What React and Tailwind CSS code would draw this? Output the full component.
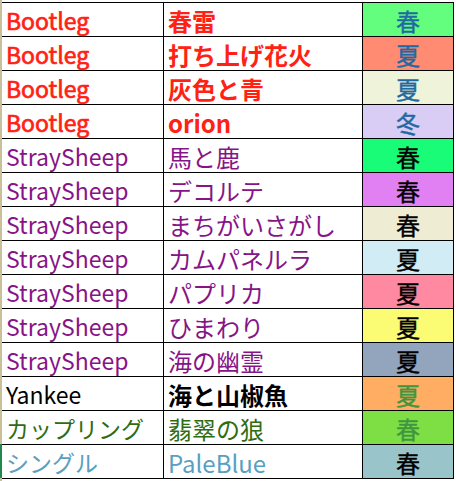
import React from 'react';

const RED = 'text-[#ff2214]';
const PURPLE = 'text-[#871487]';
const GREEN = 'text-[#2f6c12]';
const SKY = 'text-[#5a9fbf]';
const BLUE = 'text-[#2069a3]';
const LEAF = 'text-[#3e9640]';

// one row per song: artist, title, season cell
const rows = [
    { artist: 'Bootleg', title: '春雷', season: '春', a: RED, t: RED, bold: true, bg: 'bg-[#64fe7e]', s: BLUE },
    { artist: 'Bootleg', title: '打ち上げ花火', season: '夏', a: RED, t: RED, bold: true, bg: 'bg-[#ff8c72]', s: BLUE },
    { artist: 'Bootleg', title: '灰色と青', season: '夏', a: RED, t: RED, bold: true, bg: 'bg-[#eef3d9]', s: BLUE },
    { artist: 'Bootleg', title: 'orion', season: '冬', a: RED, t: RED, bold: true, bg: 'bg-[#d9ccf5]', s: BLUE },
    { artist: 'StraySheep', title: '馬と鹿', season: '春', a: PURPLE, t: PURPLE, bg: 'bg-[#19fc77]', s: 'text-black' },
    { artist: 'StraySheep', title: 'デコルテ', season: '春', a: PURPLE, t: PURPLE, bg: 'bg-[#e080f2]', s: 'text-black' },
    { artist: 'StraySheep', title: 'まちがいさがし', season: '春', a: PURPLE, t: PURPLE, bg: 'bg-[#eeedd3]', s: 'text-black' },
    { artist: 'StraySheep', title: 'カムパネルラ', season: '夏', a: PURPLE, t: PURPLE, bg: 'bg-[#d1ecf5]', s: 'text-black' },
    { artist: 'StraySheep', title: 'パプリカ', season: '夏', a: PURPLE, t: PURPLE, bg: 'bg-[#ff89a0]', s: 'text-black' },
    { artist: 'StraySheep', title: 'ひまわり', season: '夏', a: PURPLE, t: PURPLE, bg: 'bg-[#fbfb74]', s: 'text-black' },
    { artist: 'StraySheep', title: '海の幽霊', season: '夏', a: PURPLE, t: PURPLE, bg: 'bg-[#93a5bd]', s: 'text-black' },
    { artist: 'Yankee', title: '海と山椒魚', season: '夏', a: 'text-black', t: 'text-black font-bold', bg: 'bg-[#ffad62]', s: LEAF },
    { artist: 'カップリング', title: '翡翠の狼', season: '春', a: GREEN, t: GREEN, bg: 'bg-[#7ddf43]', s: LEAF },
    { artist: 'シングル', title: 'PaleBlue', season: '春', a: SKY, t: SKY, bg: 'bg-[#99c4ca]', s: 'text-black' },
];

export default function App() {
    return (
        <div className="w-[456px] h-[481px] bg-white flex font-['Noto_Sans_CJK_JP',sans-serif] leading-none">
            {/* sheet edge strip */}
            <div className="w-[2px] flex flex-col">
                <div className="h-[444px] bg-[#c9bf98]"></div>
                <div className="h-[34px] bg-[#21874a]"></div>
                <div className="flex-1 bg-[#c9bf98]"></div>
            </div>

            <div className="pt-[2px]">
                <div className="w-[452px] border-t border-black">
                    {rows.map((r, i) => (
                        <div key={i} className="h-[34px] grid grid-cols-[162px_199px_91px] border-b border-black">
                            <div className={`border-r border-black pl-[4px] flex items-center pt-[2px] text-[23px] ${r.a} ${r.bold ? '[-webkit-text-stroke:0.7px_#ff2214]' : ''}`}>
                                {r.artist}
                            </div>
                            <div className={`border-r border-black pl-[4px] flex items-center pt-[2px] text-[24px] ${r.t} ${r.bold ? 'font-bold' : ''}`}>
                                {r.title}
                            </div>
                            <div className={`border-r border-black flex items-center justify-center pt-[2px] text-[24px] [-webkit-text-stroke:0.4px_currentColor] ${r.bg} ${r.s}`}>
                                {r.season}
                            </div>
                        </div>
                    ))}
                </div>
            </div>
        </div>
    );
}
